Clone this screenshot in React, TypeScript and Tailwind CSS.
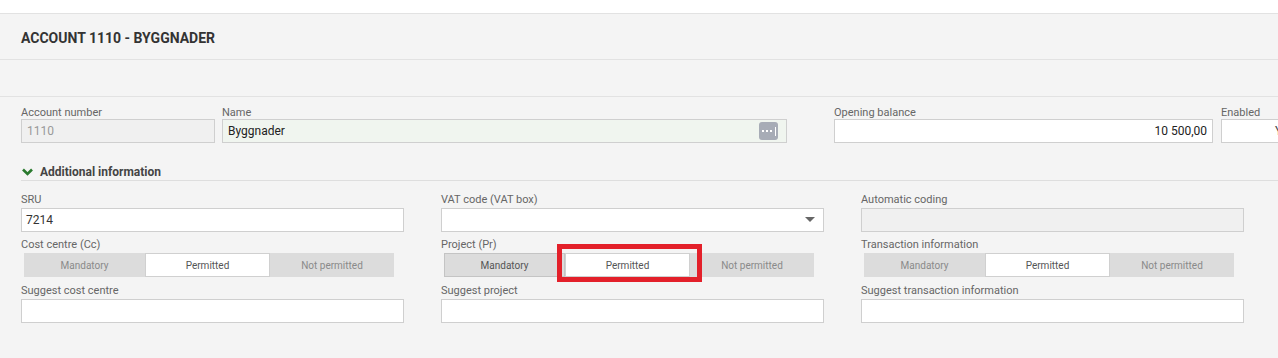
import React from 'react';

type SegProps = {
  dark?: boolean;
  highlight?: boolean;
};

const Label = ({ children, className = '' }: { children: React.ReactNode; className?: string }) => (
  <div className={`h-[16px] text-[11px] leading-[16px] text-[#666] ${className}`}>{children}</div>
);

const Segments = ({ dark, highlight }: SegProps) => (
  <div className="ml-[3px] flex h-[24px] w-[370px] bg-[#dcdcdc] text-[10px]">
    <div
      className={`flex w-[121px] items-center justify-center ${
        dark ? 'border border-[#c4c4c4] text-[#555]' : 'text-[#8a8a8a]'
      }`}
    >
      Mandatory
    </div>
    <div className="relative flex w-[125px] items-center justify-center border border-[#d0d0d0] bg-white text-[#555]">
      Permitted
      {highlight && (
        <div className="pointer-events-none absolute -top-[10px] -bottom-[6px] -left-[9px] -right-[13px] border-[5px] border-[#e3202a]" />
      )}
    </div>
    <div className="flex flex-1 items-center justify-center text-[#8a8a8a]">Not permitted</div>
  </div>
);

const Field = ({ children }: { children?: React.ReactNode }) => (
  <div className="flex h-[24px] w-full items-center border border-[#cfcfcf] bg-white px-[4px] text-[12px] text-[#333]">
    {children}
  </div>
);

const Column = ({
  top,
  topField,
  mid,
  segDark,
  highlight,
  bottom,
}: {
  top: string;
  topField: React.ReactNode;
  mid: string;
  segDark?: boolean;
  highlight?: boolean;
  bottom: string;
}) => (
  <div className="flex w-[383px] shrink-0 flex-col">
    <Label>{top}</Label>
    {topField}
    <Label className="mt-[5px]">{mid}</Label>
    <Segments dark={segDark} highlight={highlight} />
    <Label className="mt-[6px]">{bottom}</Label>
    <Field />
  </div>
);

export default function App() {
  return (
    <div className="h-[358px] w-[1278px] overflow-hidden bg-[#f4f4f4] font-['Roboto',sans-serif]">
      <div className="h-[14px] border-b border-[#e2e2e2] bg-white" />
      <div className="flex h-[46px] items-center border-b border-[#e2e2e2] px-[21px] pt-[4px]">
        <h1 className="text-[14px] font-bold text-[#333]">ACCOUNT 1110 - BYGGNADER</h1>
      </div>
      <div className="h-[37px] border-b border-[#e2e2e2]" />

      <div className="pl-[21px] pt-[6px]">
        <div className="flex">
          <div className="flex w-[194px] shrink-0 flex-col">
            <Label className="leading-[19px]">Account number</Label>
            <div className="flex h-[24px] items-center border border-[#cfcfcf] bg-[#f0f0f0] px-[5px] text-[12px] text-[#999]">
              1110
            </div>
          </div>
          <div className="ml-[7px] flex w-[565px] shrink-0 flex-col">
            <Label className="leading-[19px]">Name</Label>
            <div className="flex h-[24px] items-center border border-[#cfcfcf] bg-[#f0f5ef] pl-[5px] pr-[8px] text-[12px] text-[#222]">
              <span className="flex-1">Byggnader</span>
              <span className="flex h-[18px] w-[19px] items-center justify-center gap-[2px] rounded-[3px] bg-[#a7acb6]">
                <span className="h-[2px] w-[2px] bg-white" />
                <span className="h-[2px] w-[2px] bg-white" />
                <span className="h-[2px] w-[2px] bg-white" />
                <span className="ml-[1px] h-[9px] w-[1px] bg-white" />
              </span>
            </div>
          </div>
          <div className="ml-[47px] flex w-[379px] shrink-0 flex-col">
            <Label className="leading-[19px]">Opening balance</Label>
            <div className="flex h-[24px] items-center justify-end border border-[#cfcfcf] bg-white px-[5px] text-[12px] text-[#222]">
              10 500,00
            </div>
          </div>
          <div className="ml-[8px] flex w-[80px] shrink-0 flex-col">
            <Label className="leading-[19px]">Enabled</Label>
            <div className="flex h-[24px] items-center border border-[#cfcfcf] bg-white pl-[53px] text-[12px] text-[#444]">
              Yes
            </div>
          </div>
        </div>

        <div className="mt-[20px] flex h-[18px] items-center gap-[7px] border-b border-[#dedede] pl-[1px]">
          <svg width="11" height="8" viewBox="0 0 11 8">
            <path d="M1 1.5 L5.5 6 L10 1.5" stroke="#2a7a2e" strokeWidth="2.6" fill="none" />
          </svg>
          <span className="text-[12px] font-bold text-[#444]">Additional information</span>
        </div>

        <div className="mt-[11px] flex gap-[37px]">
          <Column
            top="SRU"
            topField={<Field>7214</Field>}
            mid="Cost centre (Cc)"
            bottom="Suggest cost centre"
          />
          <Column
            top="VAT code (VAT box)"
            topField={
              <Field>
                <span className="flex-1" />
                <svg width="10" height="6" viewBox="0 0 10 6" className="mr-[4px]">
                  <path d="M0 0 H10 L5 5 Z" fill="#666" />
                </svg>
              </Field>
            }
            mid="Project (Pr)"
            segDark
            highlight
            bottom="Suggest project"
          />
          <Column
            top="Automatic coding"
            topField={<div className="h-[24px] w-full border border-[#cfcfcf] bg-[#f0f0f0]" />}
            mid="Transaction information"
            bottom="Suggest transaction information"
          />
        </div>
      </div>
    </div>
  );
}
